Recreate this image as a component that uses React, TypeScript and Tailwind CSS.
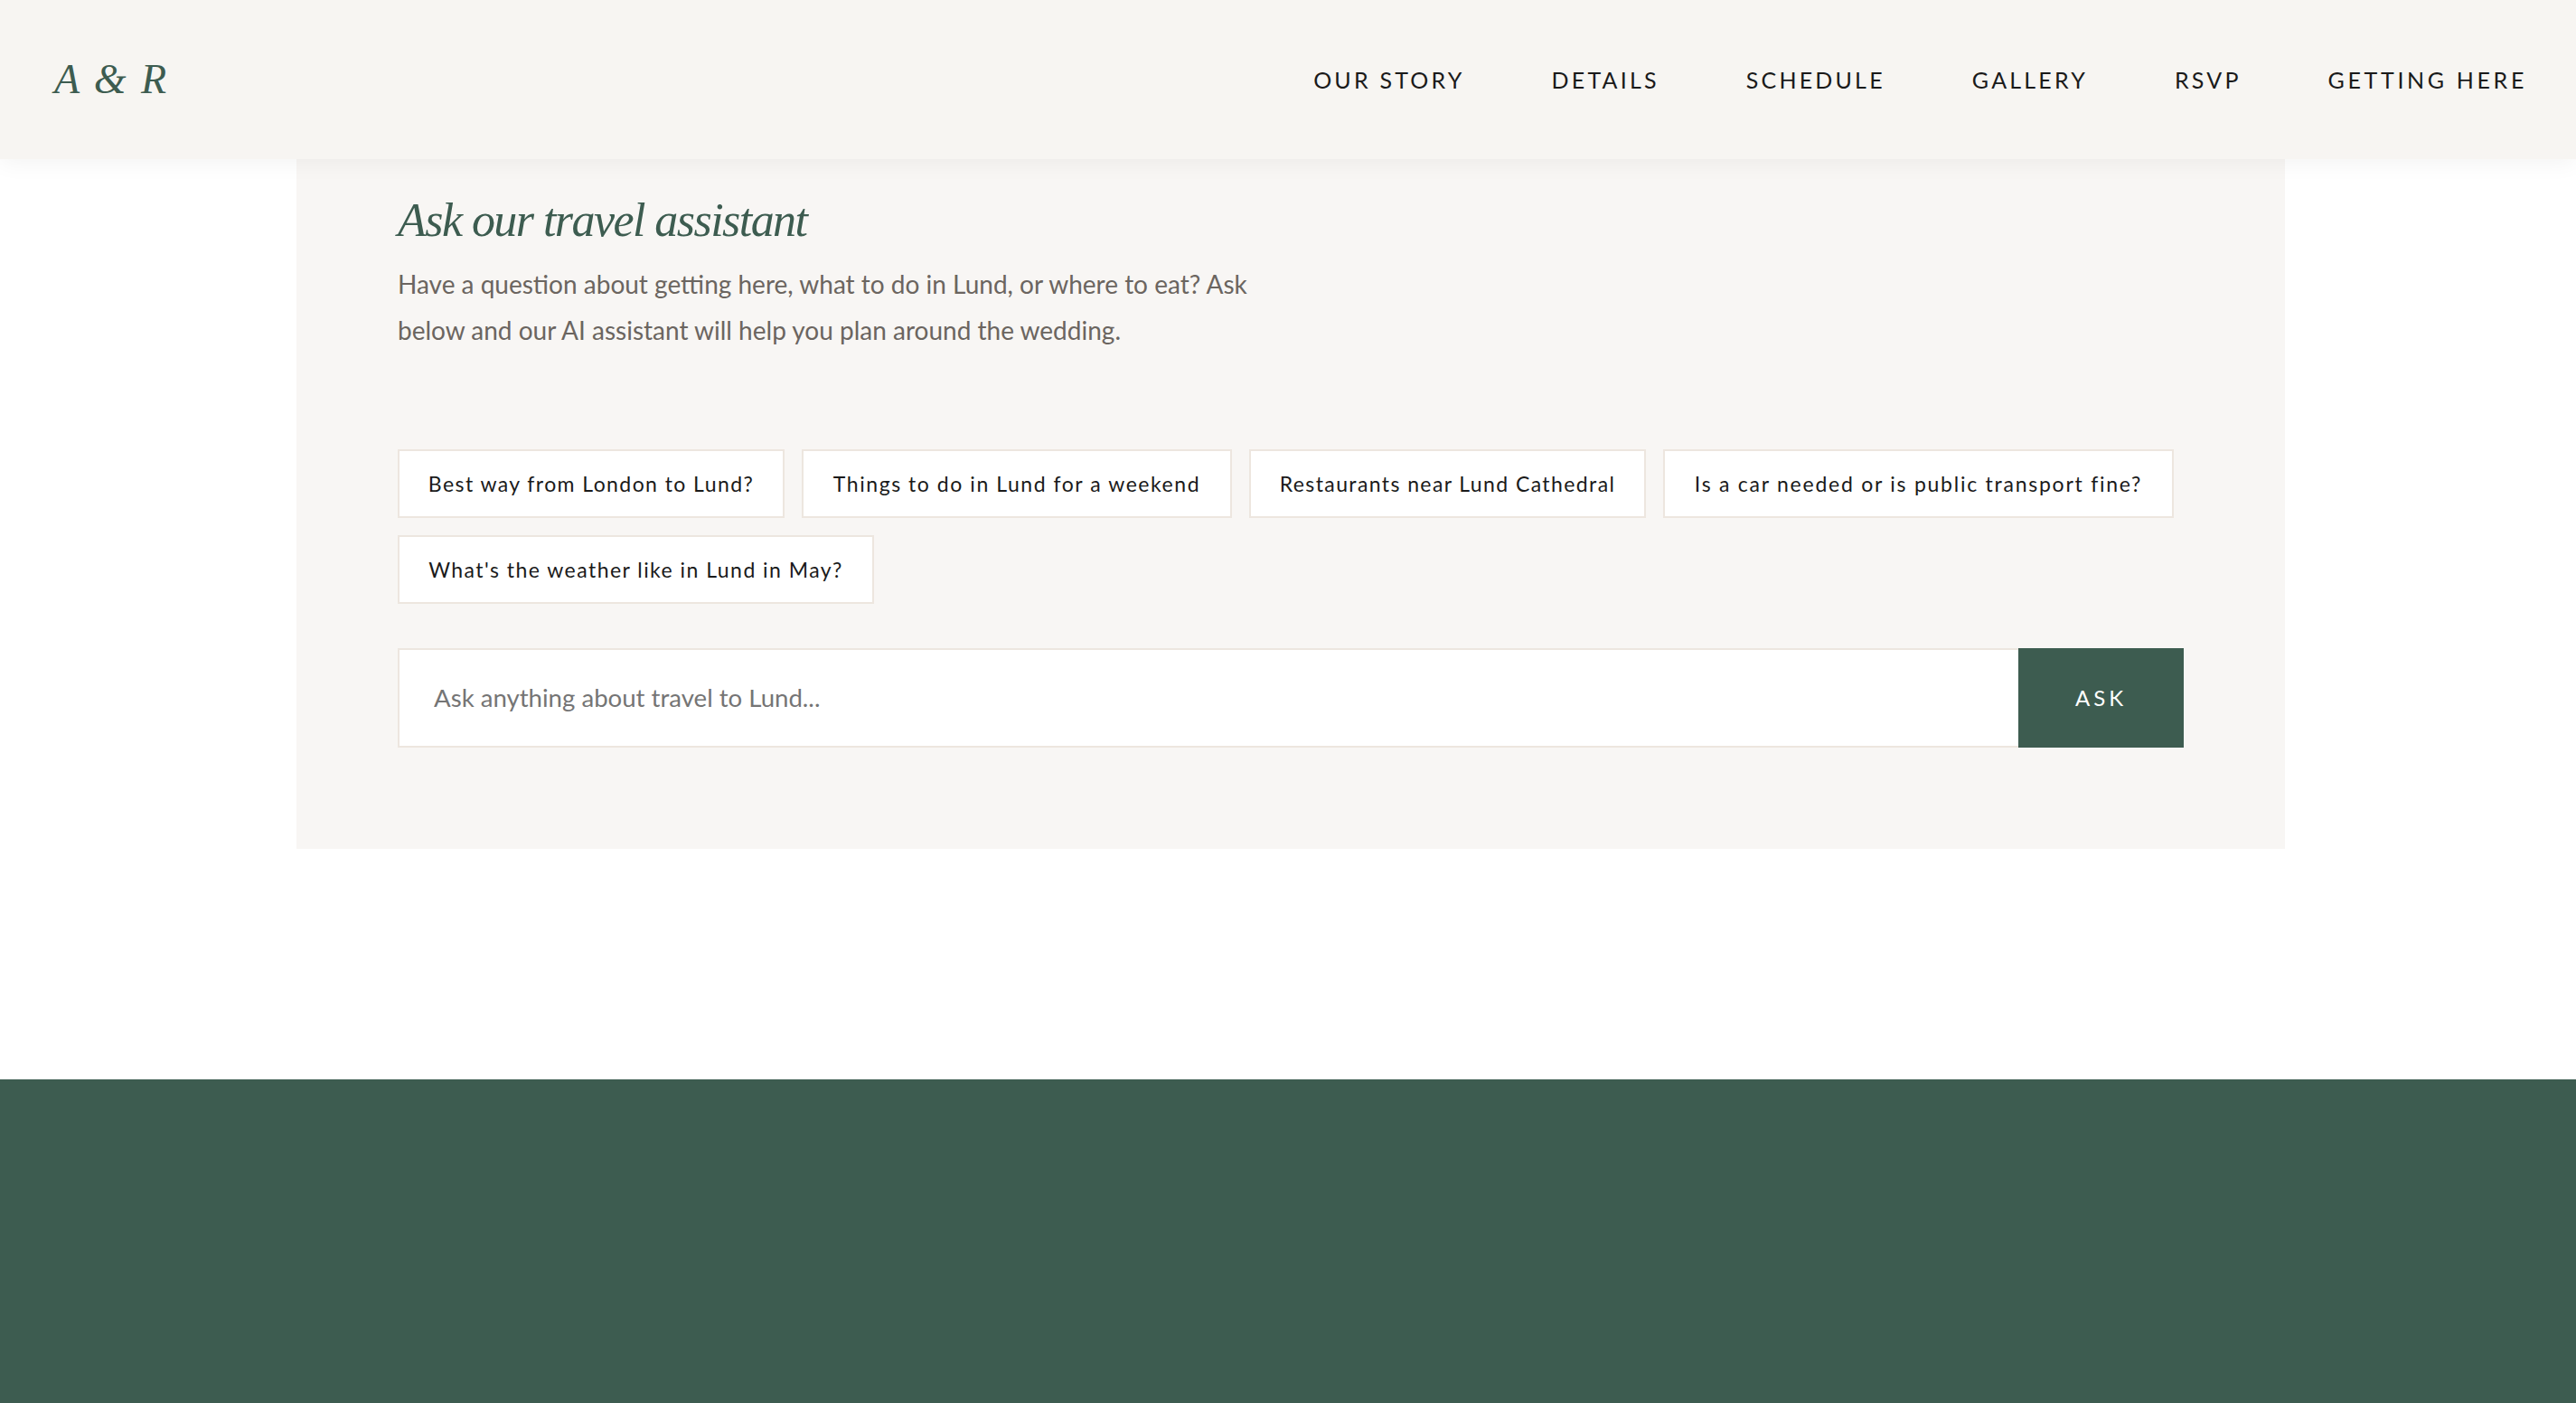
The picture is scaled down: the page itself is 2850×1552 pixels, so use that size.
const navLinks = [
  { label: "OUR STORY", tracking: "tracking-[3.2px]" },
  { label: "DETAILS", tracking: "tracking-[3.2px]" },
  { label: "SCHEDULE", tracking: "tracking-[3.2px]" },
  { label: "GALLERY", tracking: "tracking-[3.2px]" },
  { label: "RSVP", tracking: "tracking-[3.2px]" },
  { label: "GETTING HERE", tracking: "tracking-[3.65px]" },
];

const suggestions = [
  { text: "Best way from London to Lund?", size: "w-[428px] tracking-[1.42px]" },
  { text: "Things to do in Lund for a weekend", size: "w-[476px] tracking-[1.55px]" },
  { text: "Restaurants near Lund Cathedral", size: "w-[439px] tracking-[1.4px]" },
  { text: "Is a car needed or is public transport fine?", size: "w-[565px] tracking-[1.75px]" },
  { text: "What's the weather like in Lund in May?", size: "w-[527px] tracking-[1.46px]" },
];

export default function App() {
  return (
    <div className="flex min-h-screen flex-col bg-white font-['Lato',sans-serif]">
      {/* Header */}
      <header className="relative z-10 flex h-[176px] items-center justify-between bg-[#f7f5f2] pl-[60px] pr-[54px] shadow-[0_4px_24px_rgba(0,0,0,0.05)]">
        <a className="font-['Liberation_Serif',serif] text-[46px] italic leading-none tracking-[2.5px] text-[#3d5c50]">
          A &amp; R
        </a>
        <nav className="flex gap-[96px]">
          {navLinks.map((link) => (
            <a key={link.label} className={`text-[25px] leading-none text-[#1a1a1a] ${link.tracking}`}>
              {link.label}
            </a>
          ))}
        </nav>
      </header>

      <main className="pb-[255px]">
        <section className="ml-[328px] w-[2200px] bg-[#f8f6f4] px-[112px] pb-[112px] pt-[33px]">
          <h2 className="font-['Liberation_Serif',serif] text-[52px] italic leading-[70px] tracking-[-1.55px] text-[#3d5c50]">
            Ask our travel assistant
          </h2>
          <p className="mt-[10px] max-w-[1000px] text-[28px] leading-[51px] text-[#6b6560]">
            Have a question about getting here, what to do in Lund, or where to eat? Ask below and our AI assistant will help you plan around the wedding.
          </p>

          <div className="mt-[106px] flex flex-wrap gap-[19px]">
            {suggestions.map((s) => (
              <button
                key={s.text}
                className={`h-[76px] border-2 border-[#ede6df] bg-white text-center text-[23px] text-[#1a1a1a] ${s.size}`}
              >
                {s.text}
              </button>
            ))}
          </div>

          <div className="mt-[49px] flex h-[110px]">
            <input
              placeholder="Ask anything about travel to Lund..."
              className="min-w-0 flex-1 border-2 border-r-0 border-[#ede6df] bg-white px-[38px] text-[27.6px] text-[#1a1a1a] outline-none placeholder:text-[#757575]"
            />
            <button className="w-[183px] bg-[#3d5c50] text-[24px] tracking-[4px] text-white">ASK</button>
          </div>
        </section>
      </main>

      <footer className="flex-1 bg-[#3d5c50]" />
    </div>
  );
}
